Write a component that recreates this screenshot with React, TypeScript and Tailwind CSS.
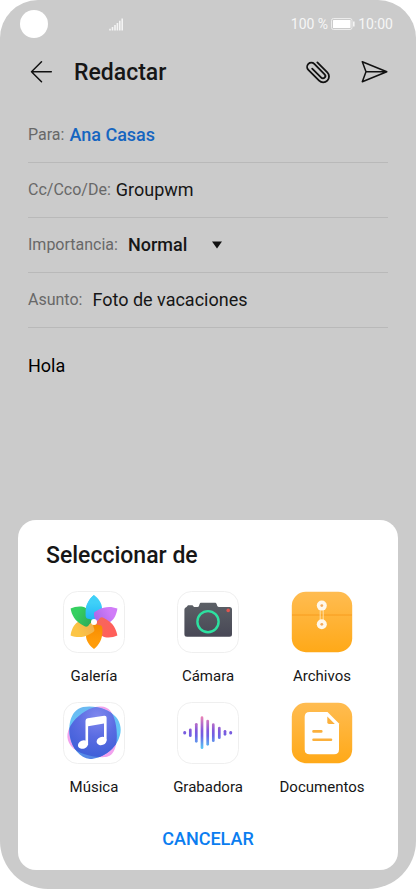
import React, { useState } from 'react';

interface Source {
  id: string;
  label: string;
  icon: React.ReactNode;
}

const PETAL = 'M31 4 C26 8 22.6 14 22.6 21 L22.6 24.5 C22.6 27 24 28 26.5 28 L31.5 29.5 C36 26 39 21 39 17 C39 12 35 7 31 4 Z';
const MUSIC_CYAN = 'M20 5 C32 3 46 7 53 15 C58 21 59 29 56 36 C52 48 38 57 27 57 C17 56 9 46 7 35 C5 24 7 8 20 5 Z';
const MUSIC_PINK = 'M38 4.5 C46 4.5 50.5 11 52.5 21 C55.5 35 54 54 43 55 C32 56 14 52 8 44 C2 36 4 28 10 20 C17 11 29 4 38 4.5 Z';

const PETALS = [
  { id: 'cyan', from: '#3fd0f8', to: '#1fb4f5', angle: 0 },
  { id: 'purple', from: '#d07cf8', to: '#a866e8', angle: 60 },
  { id: 'red', from: '#ff5f5a', to: '#f5685c', angle: 120 },
  { id: 'orange', from: '#ff9c0a', to: '#f58a00', angle: 180 },
  { id: 'yellow', from: '#fcc545', to: '#f0b04e', angle: 240 },
  { id: 'green', from: '#35d060', to: '#2faa58', angle: 300 }
];

const WAVE_BARS = [
  { x: 7.7, top: 30, bottom: 31.5 },
  { x: 13.3, top: 27.5, bottom: 34 },
  { x: 19.3, top: 22, bottom: 39.7 },
  { x: 25, top: 15.3, bottom: 46 },
  { x: 30.7, top: 18.7, bottom: 42.7 },
  { x: 36.3, top: 22.3, bottom: 39 },
  { x: 42.3, top: 25.7, bottom: 36 },
  { x: 48, top: 29, bottom: 32.7 },
  { x: 53.7, top: 30, bottom: 31.5 }
];

const WhiteTile = () => (
  <rect x="0.5" y="0.5" width="61" height="61" rx="14" fill="#fff" stroke="#efefef" />
);

const GalleryIcon = () => (
  <svg viewBox="0 0 62 62" className="w-[62px] h-[62px]" aria-hidden="true">
    <defs>
      {PETALS.map((p) => (
        <linearGradient key={p.id} id={`petal-${p.id}`} x1="0" y1="0" x2="0" y2="1">
          <stop offset="0.3" stopColor={p.from} />
          <stop offset="1" stopColor={p.to} />
        </linearGradient>
      ))}
      <clipPath id="petal-left">
        <rect x="20" y="0" width="11" height="31" />
      </clipPath>
    </defs>
    <WhiteTile />
    {PETALS.map((p) => (
      <path key={p.id} d={PETAL} fill={`url(#petal-${p.id})`} transform={`rotate(${p.angle} 31 31)`} />
    ))}
    {/* first petal again, so it also overlaps the last one */}
    <path d={PETAL} fill="url(#petal-cyan)" clipPath="url(#petal-left)" />
    <circle cx="31" cy="31" r="3" fill="#fff" />
  </svg>
);

const CameraIcon = () => (
  <svg viewBox="0 0 62 62" className="w-[62px] h-[62px]" aria-hidden="true">
    <defs>
      <linearGradient id="camera-body" x1="0" y1="0" x2="0" y2="1">
        <stop offset="0" stopColor="#5c6066" />
        <stop offset="1" stopColor="#484856" />
      </linearGradient>
    </defs>
    <WhiteTile />
    <path
      d="M9.5 16 L11 14.3 H15.5 L17 16 H20.5 C22 16 22 15 22.4 13.5 C22.8 12 23.3 11.7 24.5 11.7 H37.7 C39 11.7 39.4 12.2 39.8 13.5 C40.2 15 40.5 16 42 16 H52.5 Q55 16 55 18.5 V43.2 Q55 45.7 52.5 45.7 H10 Q7.4 45.7 7.4 43.2 V18.5 Q7.4 16.5 9.5 16 Z"
      fill="url(#camera-body)"
    />
    <circle cx="31" cy="30.7" r="10.6" fill="none" stroke="#2de0a0" strokeWidth="2.4" />
    <circle cx="51.2" cy="19.4" r="1.8" fill="#e0554f" />
  </svg>
);

const OrangeTile = ({ id }: { id: string }) => (
  <>
    <defs>
      <linearGradient id={id} x1="0" y1="0" x2="0" y2="1">
        <stop offset="0" stopColor="#ffbc51" />
        <stop offset="1" stopColor="#ffa918" />
      </linearGradient>
    </defs>
    <rect x="0.8" y="0.8" width="60.4" height="60.4" rx="14" fill={`url(#${id})`} />
  </>
);

const FilesIcon = () => (
  <svg viewBox="0 0 62 62" className="w-[62px] h-[62px]" aria-hidden="true">
    <OrangeTile id="files-bg" />
    <path d="M1 24 H61" stroke="#f79a1c" strokeWidth="0.9" />
    <path d="M29.2 18 V30 M32.2 18 V30" stroke="#ffe3b0" strokeWidth="0.9" />
    <circle cx="30.8" cy="14.6" r="5" fill="#fff8ea" />
    <circle cx="30.8" cy="33.3" r="5" fill="#fff8ea" />
    <circle cx="30.8" cy="14.6" r="1.4" fill="#f5a95a" />
    <circle cx="30.8" cy="33.3" r="1.4" fill="#f5a95a" />
  </svg>
);

const MusicIcon = () => (
  <svg viewBox="0 0 62 62" className="w-[62px] h-[62px]" aria-hidden="true">
    <defs>
      <linearGradient id="music-cyan" x1="0" y1="0" x2="0" y2="1">
        <stop offset="0" stopColor="#6bb9f2" />
        <stop offset="0.5" stopColor="#62c8f7" />
        <stop offset="1" stopColor="#5382e4" />
      </linearGradient>
      <radialGradient id="music-blue" cx="0.6" cy="0.2" r="0.8">
        <stop offset="0" stopColor="#8088ee" />
        <stop offset="0.5" stopColor="#5a6ce2" />
        <stop offset="1" stopColor="#3f5fd8" />
      </radialGradient>
      <clipPath id="music-clip">
        <path d={MUSIC_CYAN} />
      </clipPath>
    </defs>
    <WhiteTile />
    <path d={MUSIC_PINK} fill="#f2a2ee" />
    <path d={MUSIC_CYAN} fill="url(#music-cyan)" />
    <path d={MUSIC_PINK} fill="url(#music-blue)" clipPath="url(#music-clip)" />
    <path
      d="M22.5 39 V18.8 Q22.5 16.6 24.7 16.2 L41.2 13.8 Q43.6 13.5 43.6 15.8 V38.5 H41 V21.5 L25.1 24.2 V43 H22.5 Z"
      fill="#fff"
    />
    <ellipse cx="20" cy="42.6" rx="5.2" ry="4.1" transform="rotate(-20 20 42.6)" fill="#fff" />
    <ellipse cx="38.6" cy="39" rx="5.1" ry="4.1" transform="rotate(-20 38.6 39)" fill="#fff" />
  </svg>
);

const RecorderIcon = () => (
  <svg viewBox="0 0 62 62" className="w-[62px] h-[62px]" aria-hidden="true">
    <defs>
      <linearGradient id="wave" gradientUnits="userSpaceOnUse" x1="0" y1="14" x2="0" y2="47">
        <stop offset="0" stopColor="#f084b4" />
        <stop offset="0.45" stopColor="#8058dc" />
        <stop offset="0.6" stopColor="#6c62e4" />
        <stop offset="1" stopColor="#56cdf6" />
      </linearGradient>
    </defs>
    <WhiteTile />
    {WAVE_BARS.map((bar) => (
      <rect
        key={bar.x}
        x={bar.x - 1.35}
        y={bar.top - 1}
        width="2.7"
        height={bar.bottom - bar.top + 2}
        rx="1.35"
        fill="url(#wave)"
      />
    ))}
  </svg>
);

const DocumentsIcon = () => (
  <svg viewBox="0 0 62 62" className="w-[62px] h-[62px]" aria-hidden="true">
    <OrangeTile id="documents-bg" />
    <path d="M18.5 10 H36.5 L48 21.5 V47.5 Q48 52.3 43.2 52.3 H18.5 Q13.7 52.3 13.7 47.5 V14.8 Q13.7 10 18.5 10 Z" fill="#fff" />
    <path d="M36.3 14.5 L43.8 22 H38 Q36.3 22 36.3 20.3 Z" fill="#fbb03c" />
    <path d="M22.5 29.4 H30.3 M22.5 37.7 H40" stroke="#fbb03c" strokeWidth="2.6" strokeLinecap="round" />
  </svg>
);

const SOURCES: Source[] = [
  { id: 'gallery', label: 'Galería', icon: <GalleryIcon /> },
  { id: 'camera', label: 'Cámara', icon: <CameraIcon /> },
  { id: 'files', label: 'Archivos', icon: <FilesIcon /> },
  { id: 'music', label: 'Música', icon: <MusicIcon /> },
  { id: 'recorder', label: 'Grabadora', icon: <RecorderIcon /> },
  { id: 'documents', label: 'Documentos', icon: <DocumentsIcon /> }
];

const StatusBar = () => (
  <div className="h-12 pl-5 pr-[23px] flex items-center text-sm text-[#f6f6f6]">
    <span className="w-7 h-7 rounded-full bg-white"></span>
    <svg viewBox="0 0 14 13" className="w-[14px] h-[13px] ml-[61px]" aria-hidden="true">
      <path
        d="M1 10.8 V12.5 M3.5 9 V12.5 M6 7 V12.5 M8.4 5 V12.5 M10.8 2.8 V12.5 M13.2 0.4 V12.5"
        stroke="#f4f4f4"
        strokeWidth="1.6"
      />
    </svg>
    <span className="ml-auto">100 %</span>
    <svg viewBox="0 0 24 12" className="w-6 h-3 mx-[3px]" aria-hidden="true">
      <rect x="0.5" y="0.5" width="20.5" height="11" rx="2" fill="none" stroke="#ececec" />
      <rect x="2" y="2" width="17.5" height="8" rx="0.5" fill="#fff" />
      <path d="M22.8 3.5 V8.5" stroke="#f4f4f4" strokeWidth="1.6" />
    </svg>
    <span>10:00</span>
  </div>
);

const Header = () => (
  <header className="h-12 pl-[29px] pr-7 flex items-center">
    <button type="button" aria-label="Atrás">
      <svg viewBox="0 0 24 24" className="w-6 h-6" fill="none" stroke="#111" strokeWidth="1.5" strokeLinecap="round" strokeLinejoin="round">
        <path d="M12.5 1.7 L2.5 11.7 L12.5 21.7 M2.5 11.7 H22.3" />
      </svg>
    </button>
    <h1 className="ml-[21px] pt-0.5 text-[23px] leading-8 font-medium">Redactar</h1>
    <button type="button" aria-label="Adjuntar" className="ml-auto">
      <svg viewBox="0 0 24 24" className="w-6 h-6" fill="none" stroke="#111" strokeWidth="1.8" strokeLinecap="round">
        <g transform="translate(12.4 12) rotate(-45)">
          <path d="M6 -7.5 V6.6 A5.8 5.8 0 0 1 -5.6 6.6 V-8.6 A4.2 4.2 0 0 1 2.8 -8.6 V6 A2.4 2.4 0 0 1 -2 6 V-6.8" />
        </g>
      </svg>
    </button>
    <button type="button" aria-label="Enviar" className="ml-[30px]">
      <svg viewBox="0 0 28 24" className="w-7 h-6" fill="none" stroke="#111" strokeWidth="1.5" strokeLinejoin="round">
        <path d="M2.3 1.7 L26.8 11.7 L2.3 21.7 L6 11.7 Z M6 11.7 H26.8" />
      </svg>
    </button>
  </header>
);

const App: React.FC = () => {
  const [to, setTo] = useState('Ana Casas');
  const [from, setFrom] = useState('Groupwm');
  const [priority, setPriority] = useState('Normal');
  const [subject, setSubject] = useState('Foto de vacaciones');
  const [body, setBody] = useState('Hola');
  const [sheetOpen, setSheetOpen] = useState(true);

  return (
    <div className="min-h-screen bg-white font-['Roboto',sans-serif] text-[#161616]">
      <div className="min-h-screen flex flex-col bg-[#cbcbcb] rounded-t-[38px] rounded-b-[48px]">
        <StatusBar />
        <Header />

        <form className="flex-1 flex flex-col mt-3 px-7">
          <div className="h-[55px] flex items-center gap-[5px] border-b border-[#b9b9b9]">
            <label htmlFor="to" className="text-base text-[#686868]">Para:</label>
            <input
              id="to"
              value={to}
              onChange={(e) => setTo(e.target.value)}
              className="flex-1 min-w-0 text-lg font-medium text-[#1565c0] bg-transparent outline-none"
            />
          </div>
          <div className="h-[55px] flex items-center gap-[5px] border-b border-[#b9b9b9]">
            <label htmlFor="from" className="text-base text-[#686868]">Cc/Cco/De:</label>
            <input
              id="from"
              value={from}
              onChange={(e) => setFrom(e.target.value)}
              className="flex-1 min-w-0 text-lg bg-transparent outline-none"
            />
          </div>
          <div className="h-[55px] flex items-center gap-[10px] border-b border-[#b9b9b9]">
            <label htmlFor="priority" className="text-base text-[#686868]">Importancia:</label>
            <div className="relative">
              <select
                id="priority"
                value={priority}
                onChange={(e) => setPriority(e.target.value)}
                className="appearance-none w-[94px] text-lg font-medium bg-transparent outline-none"
              >
                <option>Normal</option>
                <option>Alta</option>
                <option>Baja</option>
              </select>
              <svg viewBox="0 0 10 8" className="absolute right-0 top-1/2 -translate-y-1/2 w-[10px] h-2 pointer-events-none" aria-hidden="true">
                <path d="M0 0.5 H10 L5 7.5 Z" fill="#111" />
              </svg>
            </div>
          </div>
          <div className="h-[55px] flex items-center gap-[10px] border-b border-[#b9b9b9]">
            <label htmlFor="subject" className="text-base text-[#686868]">Asunto:</label>
            <input
              id="subject"
              value={subject}
              onChange={(e) => setSubject(e.target.value)}
              className="flex-1 min-w-0 text-lg bg-transparent outline-none"
            />
          </div>
          <textarea
            aria-label="Mensaje"
            value={body}
            onChange={(e) => setBody(e.target.value)}
            className="flex-1 mt-6 text-lg leading-7 text-black bg-transparent outline-none resize-none"
          />
        </form>

        {/* Attachment sheet */}
        {sheetOpen && (
          <section role="dialog" aria-labelledby="sheet-title" className="mx-[18px] mb-[19px] px-[19px] pt-5 pb-[10px] bg-white rounded-[18px]">
            <h2 id="sheet-title" className="px-[9px] text-[23px] leading-8 font-medium">Seleccionar de</h2>
            <div className="mt-[19px] grid grid-cols-3 gap-y-[15px]">
              {SOURCES.map((source) => (
                <button key={source.id} type="button" className="flex flex-col items-center gap-3 text-[15px] leading-[22px]">
                  {source.icon}
                  {source.label}
                </button>
              ))}
            </div>
            <button
              type="button"
              onClick={() => setSheetOpen(false)}
              className="block w-full mt-5 h-[42px] text-lg font-medium text-[#0a7df0]"
            >
              CANCELAR
            </button>
          </section>
        )}
      </div>
    </div>
  );
};

export default App;
